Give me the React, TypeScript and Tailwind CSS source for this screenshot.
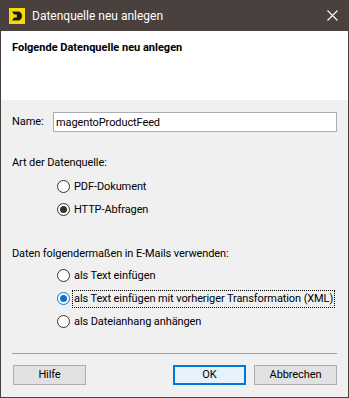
import React, { useState } from 'react';

function Radio({ checked, focused }: { checked?: boolean; focused?: boolean }) {
    return (
        <span
            className={`flex h-[13px] w-[13px] shrink-0 items-center justify-center rounded-full border bg-white ${focused ? 'border-[#0078d7]' : 'border-[#333333]'}`}
        >
            {checked && (
                <span className={`h-[7px] w-[7px] rounded-full ${focused ? 'bg-[#0078d7]' : 'bg-[#333333]'}`} />
            )}
        </span>
    );
}

export default function App() {
    const [source, setSource] = useState('http');
    const [mode, setMode] = useState('xml');

    const sources = [
        { id: 'pdf', label: 'PDF-Dokument' },
        { id: 'http', label: 'HTTP-Abfragen' },
    ];
    const modes = [
        { id: 'text', label: 'als Text einfügen' },
        { id: 'xml', label: 'als Text einfügen mit vorheriger Transformation (XML)' },
        { id: 'file', label: 'als Dateianhang anhängen' },
    ];

    return (
        <div
            className="flex h-[398px] w-[349px] flex-col whitespace-nowrap border-x border-b border-[#4a403e] bg-[#f0f0f0] text-[11px] leading-[16px] tracking-[-0.1px] text-black"
            style={{ fontFamily: 'Roboto, "Liberation Sans", Arial, sans-serif' }}
        >
            {/* title bar */}
            <div className="flex h-[31px] shrink-0 items-center bg-[#4a403e] pl-[8px] text-white">
                <svg width="16" height="16" viewBox="0 0 16 16">
                    <rect width="16" height="16" fill="#f5d90a" />
                    <path d="M3 3.5H9C11.5 3.5 13 5.5 13 8C13 10.5 11.5 12.5 9 12.5H3L5 9.5H7.8V6.5H5Z" fill="#1a1a1a" />
                </svg>
                <span className="ml-[7px] text-[12px] tracking-normal">Datenquelle neu anlegen</span>
                <svg className="ml-auto mr-[10px]" width="11" height="11" viewBox="0 0 11 11" stroke="white" strokeWidth="1.1">
                    <path d="M0.5 0.5l10 10M10.5 0.5l-10 10" />
                </svg>
            </div>

            {/* header */}
            <div className="h-[69px] shrink-0 bg-white px-[11px] pt-[9px]">
                <div className="font-bold tracking-normal">Folgende Datenquelle neu anlegen</div>
            </div>

            {/* body */}
            <div className="flex flex-1 flex-col px-[11px] pt-[12px]">
                <div className="flex items-center">
                    <span className="w-[41px]">Name:</span>
                    <input
                        className="h-[20px] flex-1 border border-[#abadb3] bg-white px-[2px] text-[11px] outline-none"
                        style={{ fontFamily: 'Roboto, "Liberation Sans", Arial, sans-serif' }}
                        defaultValue="magentoProductFeed"
                    />
                </div>

                <div className="mt-[23px]">Art der Datenquelle:</div>
                <div className="mt-[4px] flex flex-col pl-[45px]">
                    {sources.map((s) => (
                        <div key={s.id} className="flex h-[23px] items-center gap-[2px]" onClick={() => setSource(s.id)}>
                            <Radio checked={source === s.id} />
                            <span className="border border-transparent px-px">{s.label}</span>
                        </div>
                    ))}
                </div>

                <div className="mt-[25px]">Daten folgendermaßen in E-Mails verwenden:</div>
                <div className="mt-[2px] flex flex-col pl-[45px]">
                    {modes.map((m) => (
                        <div key={m.id} className="flex h-[23px] items-center gap-[2px]" onClick={() => setMode(m.id)}>
                            <Radio checked={mode === m.id} focused={m.id === 'xml'} />
                            <span className={m.id === 'xml' ? 'border border-dotted border-black px-px' : 'border border-transparent px-px'}>
                                {m.label}
                            </span>
                        </div>
                    ))}
                </div>

                <div className="mt-[20px] h-px bg-[#a0a0a0]" />

                <div className="mt-[11px] flex items-center pl-px">
                    <button className="h-[20px] w-[73px] border border-[#adadad] bg-[#e1e1e1]">Hilfe</button>
                    <button className="ml-auto h-[20px] w-[73px] border border-[#0078d7] bg-[#e5f1fb] shadow-[inset_0_0_0_1px_#0078d7]">OK</button>
                    <button className="ml-[8px] h-[20px] w-[83px] border border-[#adadad] bg-[#e1e1e1]">Abbrechen</button>
                </div>
            </div>
        </div>
    );
}
